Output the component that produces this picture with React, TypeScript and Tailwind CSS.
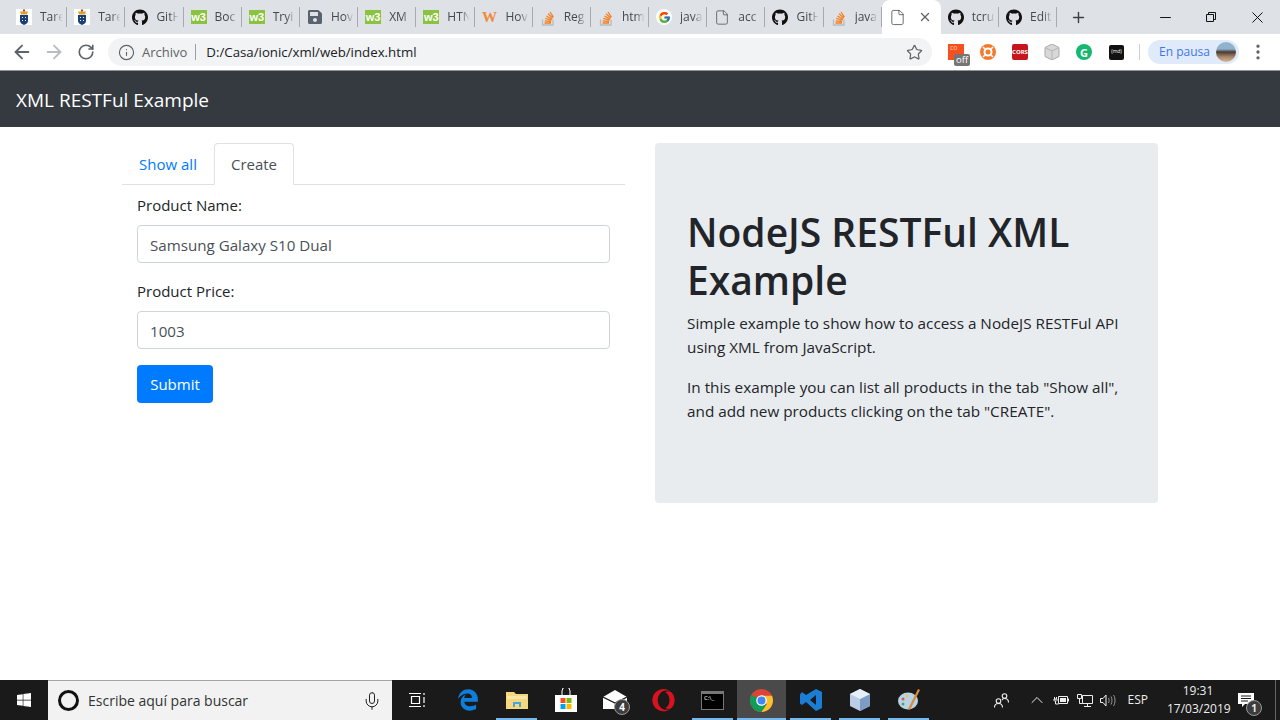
import { ArrowLeft, ArrowRight, RotateCw, Info, Star, File, X, Plus, Minus, Mic, ChevronUp, EllipsisVertical } from 'lucide-react';
import { FaGithub, FaWindows, FaEdgeLegacy, FaOpera, FaSave } from 'react-icons/fa';
import { FcGoogle } from 'react-icons/fc';
import type { ReactNode } from 'react';

const uiFont = "font-['Open_Sans','Noto_Sans',sans-serif]";

const W3 = () => (
  <span className="flex h-[14px] w-4 items-center justify-center bg-[#8ac33f] font-['Liberation_Sans',sans-serif] text-[11px] font-bold leading-none text-white">
    w3
  </span>
);

const Crest = () => (
  <svg width="16" height="16" viewBox="0 0 16 16">
    <rect width="16" height="16" fill="#fff" />
    <path d="M4 6h8v6c0 2-2 3-4 4-2-1-4-2-4-4z" fill="#1d3f77" />
    <path d="M4 2.500h8l-1 3H5z" fill="#d9a326" />
    <rect x="7" y="0.500" width="2" height="2" fill="#c9352b" />
    <path d="M6 8h1v1H6zM9 8h1v1H9zM6 11h1v1H6zM9 11h1v1H9z" fill="#fff" />
  </svg>
);

const So = () => (
  <svg width="16" height="17" viewBox="0 0 16 17" fill="none">
    <path d="M2.500 10.500v5.500h10.500v-5.500" stroke="#bcbbbb" strokeWidth="1.300" />
    <path d="M4.500 14h6.500M4.700 11.800l6.400.7M5.300 9.400l6.200 1.800M6.400 7l5.600 3.100M8 4.800l4.800 4.200M10 3l3.400 5.200" stroke="#f48024" strokeWidth="1.300" />
  </svg>
);
const Gh = () => <FaGithub size={17} className="text-[#111]" />;
const Doc = () => <File size={17} strokeWidth={1.2} className="text-[#4f5357]" />;

type TabDef = { icon: ReactNode; label: string };

const tabs: TabDef[] = [
  { icon: <Crest />, label: 'Tare' },
  { icon: <Crest />, label: 'Tare' },
  { icon: <Gh />, label: 'GitH' },
  { icon: <W3 />, label: 'Boc' },
  { icon: <W3 />, label: 'Tryi' },
  { icon: <FaSave size={16} className="text-[#5a6270]" />, label: 'Hov' },
  { icon: <W3 />, label: 'XM' },
  { icon: <W3 />, label: 'HTN' },
  {
    icon: <span className="font-['Liberation_Serif',serif] text-[15px] font-bold leading-none text-[#f08a3c]">W</span>,
    label: 'Hov',
  },
  { icon: <So />, label: 'Reg' },
  { icon: <So />, label: 'htm' },
  {
    icon: (
      <span className="flex h-4 w-4 items-center justify-center rounded-full bg-white">
        <FcGoogle size={13} />
      </span>
    ),
    label: 'java',
  },
  { icon: <Doc />, label: 'acc' },
  { icon: <Gh />, label: 'GitH' },
  { icon: <So />, label: 'java' },
];

const Tab = ({ icon, label }: TabDef) => (
  <div className="flex h-[20px] w-[58.2px] shrink-0 items-center gap-2 border-r border-[#a6a9ae] pl-[7px]">
    <span className="flex w-4 shrink-0 justify-center">{icon}</span>
    <span className="w-[24px] overflow-hidden whitespace-nowrap text-[12px] text-[#45484c] [mask-image:linear-gradient(to_right,black_55%,transparent_95%)]">
      {label}
    </span>
  </div>
);

const Browser = () => (
  <div className="shrink-0">
    <div className="flex h-[34px] items-end bg-[#dee1e6] pl-[9px]">
      <div className="flex h-[34px] items-center">
        {tabs.map((t, i) => (
          <Tab key={i} {...t} />
        ))}
      </div>
      <div className="flex h-[34px] w-[59px] shrink-0 items-center rounded-t-lg bg-white pl-[7px]">
        <Doc />
        <X size={14} strokeWidth={2.2} className="ml-[12px] text-[#5f6368]" />
      </div>
      <div className="flex h-[34px] items-center">
        <Tab icon={<Gh />} label="tcru" />
        <Tab icon={<Gh />} label="Edit" />
      </div>
      <div className="flex h-[34px] flex-1 items-center">
        <Plus size={17} strokeWidth={2} className="ml-[13px] text-[#3c4043]" />
        <div className="ml-auto flex items-center text-[#111]">
          <span className="flex w-[46px] justify-center">
            <Minus size={17} strokeWidth={1.4} />
          </span>
          <span className="flex w-[46px] justify-center">
            <svg width="10" height="10" viewBox="0 0 10 10" fill="none" stroke="currentColor">
              <path d="M.5 2.500h7v7h-7zM2.500 2.500v-2h7v7h-2" />
            </svg>
          </span>
          <span className="flex w-[46px] justify-center">
            <X size={19} strokeWidth={1.26} />
          </span>
        </div>
      </div>
    </div>
    <div className="flex h-[37px] items-center border-b border-[#8f9194] bg-white">
      <ArrowLeft size={22} strokeWidth={2} className="ml-[11px] text-[#5f6368]" />
      <ArrowRight size={22} strokeWidth={2} className="ml-[10px] text-[#b9bcc0]" />
      <RotateCw size={18} strokeWidth={2.2} className="ml-[12px] text-[#5f6368]" />
      <div className="ml-[13px] flex h-[28px] w-[824px] items-center rounded-full bg-[#f1f3f4] pl-[10px]">
        <Info size={17} strokeWidth={1.6} className="text-[#5f6368]" />
        <span className="ml-[7px] pt-[2px] text-[13px] text-[#5f6368]">Archivo</span>
        <span className="ml-[8px] h-[16px] w-px bg-[#9aa0a6]" />
        <span className="ml-[10px] pt-[2px] text-[13.25px] text-[#202124]">D:/Casa/ionic/xml/web/index.html</span>
        <Star size={17} strokeWidth={1.7} className="ml-auto mr-[9px] text-[#5f6368]" />
      </div>
      <div className="relative ml-[16px] h-4 w-4 bg-[#f4511e] pl-[2px] text-[7px] leading-[8px] text-[#ffc9b0]">
        co
        <span className="absolute left-[6px] top-[10px] rounded-[2px] bg-[#757575] px-[2px] text-[9.5px] leading-[12px] text-white">off</span>
      </div>
      <svg className="ml-[16px]" width="16" height="16" viewBox="0 0 16 16" fill="none">
        <circle cx="8" cy="8" r="8" fill="#f47a2f" />
        <circle cx="8" cy="8" r="3.500" stroke="#fff" strokeWidth="2" />
        <path d="M3 3l3 3M13 3l-3 3M3 13l3-3M13 13l-3-3" stroke="#fff" strokeWidth="1.500" />
      </svg>
      <span className="ml-[16px] flex h-4 w-4 items-center justify-center rounded-[2px] bg-[#c5161d] text-[6px] font-bold text-white">CORS</span>
      <svg className="ml-[16px]" width="16" height="16" viewBox="0 0 16 16">
        <path d="M8 0l7 3.500v9L8 16l-7-3.500v-9z" fill="#d8d8d8" stroke="#a9a9a9" />
        <path d="M8 7l7-3.500M8 7v9M8 7L1 3.500" stroke="#b5b5b5" fill="none" />
      </svg>
      <span className="ml-[16px] flex h-4 w-4 items-center justify-center rounded-full bg-[#16b76f] text-[11px] font-bold leading-none text-white">G</span>
      <span className="ml-[17px] flex h-[15px] w-[15px] items-center justify-center rounded-[2px] bg-[#111] text-[5px] text-white">(md)</span>
      <span className="ml-[15px] h-[16px] w-px bg-[#d0d0d0]" />
      <div className="ml-[8px] flex h-[24px] w-[91px] items-center rounded-full bg-[#dfeafb] pl-[11px]">
        <span className="text-[12px] text-[#3f76e4]">En pausa</span>
        <span className="ml-auto mr-[3px] h-[20px] w-[20px] rounded-full bg-[linear-gradient(to_bottom,#8fb3cc_0%,#8fb3cc_35%,#4a3a32_50%,#a7886c_75%,#d9b48f_100%)]" />
      </div>
      <EllipsisVertical size={20} strokeWidth={2} className="ml-[9px] text-[#5f6368]" />
    </div>
  </div>
);

const ProductForm = () => (
  <div className="w-[503px]">
    <div className="flex h-[42px] border-b border-[#dee2e6]">
      <span className="flex h-[41px] w-[92px] items-center justify-center pt-[1px] text-[#007bff]">Show all</span>
      <span className="flex h-[42px] w-[80px] items-center justify-center rounded-t border border-b-white border-[#dee2e6] bg-white text-[#495057]">
        Create
      </span>
    </div>
    <div className="px-[15px] pt-2">
      <label className="block h-[32px] leading-[24px] text-[#212529]">Product Name:</label>
      <input
        readOnly
        value="Samsung Galaxy S10 Dual"
        className="block h-[38px] w-full rounded border border-[#ced4da] bg-white px-3 pt-[2px] text-[15.15px] text-[#495057]"
      />
      <label className="mt-4 block h-[32px] leading-[24px] text-[#212529]">Product Price:</label>
      <input
        readOnly
        value="1003"
        className="block h-[38px] w-full rounded border border-[#ced4da] bg-white px-3 pt-[2px] text-[15.15px] text-[#495057]"
      />
      <button type="button" className="mt-4 h-[38px] w-[76px] rounded bg-[#007bff] text-white">
        Submit
      </button>
    </div>
  </div>
);

const Jumbotron = () => (
  <div className="h-[360px] w-[503px] rounded bg-[#e9ecef] px-8 pt-[65px] text-[15.3px] text-[#212529]">
    <h1 className="text-[39px] font-semibold leading-[48px]">NodeJS RESTFul XML Example</h1>
    <p className="mt-[7px] leading-[24px]">Simple example to show how to access a NodeJS RESTFul API using XML from JavaScript.</p>
    <p className="mt-4 leading-[24px]">
      In this example you can list all products in the tab "Show all", and add new products clicking on the tab "CREATE".
    </p>
  </div>
);

const Chrome = () => (
  <svg width="23" height="23" viewBox="0 0 24 24">
    <circle cx="12" cy="12" r="12" fill="#db4437" />
    <path d="M12 12L1.600 6A12 12 0 0 0 12 24l5.500-7z" fill="#0f9d58" />
    <path d="M12 7h10.900A12 12 0 0 1 12 24l5.500-8z" fill="#fbc02d" />
    <circle cx="12" cy="12" r="5.500" fill="#fff" />
    <circle cx="12" cy="12" r="4.200" fill="#4285f4" />
  </svg>
);

const VsCode = () => (
  <svg width="24" height="24" viewBox="0 0 24 24">
    <path d="M17 1l6 3v16l-6 3-10-9-4 3-2-1.500v-9L3 4l4 3zM17 7l-6 5 6 5z" fill="#1a7fd4" fillRule="evenodd" />
  </svg>
);

const TaskIcon = ({ children, active, open }: { children: ReactNode; active?: boolean; open?: boolean }) => (
  <div className={`relative flex h-10 w-[49px] items-center justify-center ${active ? 'bg-[#4a4a4a]' : ''}`}>
    {children}
    {open && <span className={`absolute bottom-0 h-[2px] bg-[#76b9ed] ${active ? 'left-0 right-0' : 'left-[4px] right-[4px]'}`} />}
  </div>
);

const Taskbar = () => (
  <div className="flex h-10 shrink-0 items-center bg-[#1a1a1a] text-white">
    <div className="flex h-10 w-12 items-center justify-center">
      <FaWindows size={16} />
    </div>
    <div className="flex h-10 w-[344px] items-center border-t border-[#a5a5a5] bg-[#f2f2f2] pl-[10px]">
      <span className="h-[21px] w-[21px] rounded-full border-[3px] border-[#111]" />
      <span className="ml-[9px] text-[14px] text-[#333]">Escribe aquí para buscar</span>
      <Mic size={20} strokeWidth={1.2} className="ml-auto mr-[10px] text-[#222]" />
    </div>
    <div className="flex w-[50px] justify-center">
      <svg width="16" height="16" viewBox="0 0 16 16" fill="none" stroke="#fff" strokeWidth="1.200">
        <path d="M0 1.500h12M0 14.500h12M2.500 4.500h8v7h-8zM15 1v2M15 5v6M15 13v2" />
      </svg>
    </div>
    <div className="ml-[1px] flex">
      <TaskIcon>
        <FaEdgeLegacy size={22} className="text-[#0f7ddb]" />
      </TaskIcon>
      <TaskIcon open>
        <svg width="22" height="20" viewBox="0 0 22 20">
          <path d="M0 2h8l2 2h12v15H0z" fill="#f5d77f" />
          <path d="M1 6h20v3H1z" fill="#fbe7a8" />
          <path d="M7 17v-5h8v5h-2v-3H9v3z" fill="#4aa4dc" />
        </svg>
      </TaskIcon>
      <TaskIcon>
        <svg width="24" height="24" viewBox="0 0 24 24">
          <path d="M1 7h22v17H1z" fill="#fff" />
          <path d="M8 7V3a4 4 0 0 1 8 0v4" fill="none" stroke="#fff" strokeWidth="1" />
          <path d="M6.500 10h5v5h-5z" fill="#f25022" />
          <path d="M12.500 10h5v5h-5z" fill="#7fba00" />
          <path d="M6.500 16h5v5h-5z" fill="#00a4ef" />
          <path d="M12.500 16h5v5h-5z" fill="#ffb900" />
        </svg>
      </TaskIcon>
      <TaskIcon>
        <svg width="24" height="20" viewBox="0 0 24 20">
          <path d="M0 7L12 0l12 7v12H0z" fill="#fff" />
          <path d="M0 7l12 6 12-6" fill="none" stroke="#1a1a1a" strokeWidth="1.200" />
        </svg>
        <span className="absolute left-[24px] top-[19px] flex h-4 w-4 items-center justify-center rounded-full border border-[#999] bg-[#3d3d3d] text-[10px] font-bold leading-none">
          4
        </span>
      </TaskIcon>
      <TaskIcon>
        <FaOpera size={23} className="text-[#d9121f]" />
      </TaskIcon>
      <TaskIcon open>
        <div className="h-[19px] w-[23px] border border-[#777] border-t-[3px] bg-black pl-[2px] text-[6px] leading-[8px]">C:\_</div>
      </TaskIcon>
      <TaskIcon active open>
        <Chrome />
      </TaskIcon>
      <TaskIcon open>
        <VsCode />
      </TaskIcon>
      <TaskIcon open>
        <svg width="22" height="22" viewBox="0 0 22 22">
          <path d="M11 0l10 5v12l-10 5-10-5V5z" fill="#b9cde6" />
          <path d="M11 10l10-5v12l-10 5z" fill="#7f9cc4" />
          <path d="M11 10L1 5l10-5 10 5z" fill="#e6eef8" />
        </svg>
      </TaskIcon>
      <TaskIcon open>
        <svg width="24" height="24" viewBox="0 0 24 24">
          <ellipse cx="11" cy="13" rx="10" ry="8.500" fill="#b7d3e8" />
          <circle cx="6" cy="11" r="1.500" fill="#e5534b" />
          <circle cx="10" cy="8" r="1.500" fill="#f4c542" />
          <circle cx="6" cy="16" r="1.500" fill="#4aa564" />
          <path d="M21 1l2 1-10 20-2-1z" fill="#d98b3a" />
        </svg>
      </TaskIcon>
    </div>
    <div className="ml-auto flex h-10 items-center text-[#eee]">
      <svg width="15" height="15" viewBox="0 0 15 15" fill="none" stroke="currentColor" strokeWidth="1.100">
        <circle cx="4.500" cy="8" r="2.300" />
        <path d="M.5 14.500c0-2.500 1.500-4 4-4s4 1.500 4 4" />
        <circle cx="10.500" cy="3" r="2.300" />
        <path d="M8 7c.5-1 1.500-1.500 2.500-1.500 2.200 0 4 1.500 4 4" />
      </svg>
      <ChevronUp size={20} strokeWidth={1.2} className="ml-[18px]" />
      <svg className="ml-[6px]" width="16" height="12" viewBox="0 0 16 12" fill="none" stroke="currentColor">
        <path d="M5.500 2.500h9v7h-9zM15.500 4.500v3" />
        <path d="M7 4h6v4H7z" fill="currentColor" stroke="none" />
        <path d="M1 6h2M1.500 3v2M3.500 3v2M1 5h3v1.500l-1 1H2l-1-1zM2.500 7.500V10h3" strokeWidth="1" />
      </svg>
      <svg className="ml-[8px]" width="16" height="13" viewBox="0 0 16 13" fill="none" stroke="currentColor">
        <path d="M5.500 1.500h10v8h-10zM.5.500h4v4h-4zM2.500 4.500v5h3M10.500 9.500v3M7 12.500h7" />
      </svg>
      <svg className="ml-[7px]" width="16" height="13" viewBox="0 0 16 13" fill="none" stroke="currentColor">
        <path d="M.5 4.500h2.500l3-3.500v11l-3-3.500H.5z" />
        <path d="M8.500 4c.8 1.500.8 3.500 0 5M11 2.500c1.300 2.500 1.300 5.500 0 8M13.500 1c2 3 2 8 0 11" stroke="#999" />
      </svg>
      <span className="ml-[12px] text-[12px]">ESP</span>
      <div className="ml-[19px] w-[62px] text-center text-[12px] leading-[18px]">
        <div>19:31</div>
        <div>17/03/2019</div>
      </div>
      <div className="relative ml-[9px] mr-[9px] flex h-10 w-[28px] items-center">
        <svg width="16" height="15" viewBox="0 0 16 15">
          <path d="M0 0h16v11H7l-3 3v-3H0z" fill="#fff" />
          <path d="M3 3h10M3 5.500h10M3 8h7" stroke="#1a1a1a" strokeWidth="1" />
        </svg>
        <span className="absolute left-[8px] top-[20px] flex h-4 w-4 items-center justify-center rounded-full border border-[#999] bg-[#3d3d3d] text-[10px] font-bold leading-none">
          1
        </span>
      </div>
      <span className="mr-[4px] h-10 w-px bg-[#666]" />
    </div>
  </div>
);

export default function App() {
  return (
    <div className={`flex h-[720px] w-[1280px] flex-col overflow-hidden bg-white text-[15px] ${uiFont}`}>
      <Browser />
      <header className="flex h-[56px] shrink-0 items-center bg-[#343a40] pl-4 pt-[2px] text-[19px] text-white">XML RESTFul Example</header>
      <main className="flex flex-1 justify-between pl-[122px] pr-[122px] pt-4">
        <ProductForm />
        <Jumbotron />
      </main>
      <Taskbar />
    </div>
  );
}
